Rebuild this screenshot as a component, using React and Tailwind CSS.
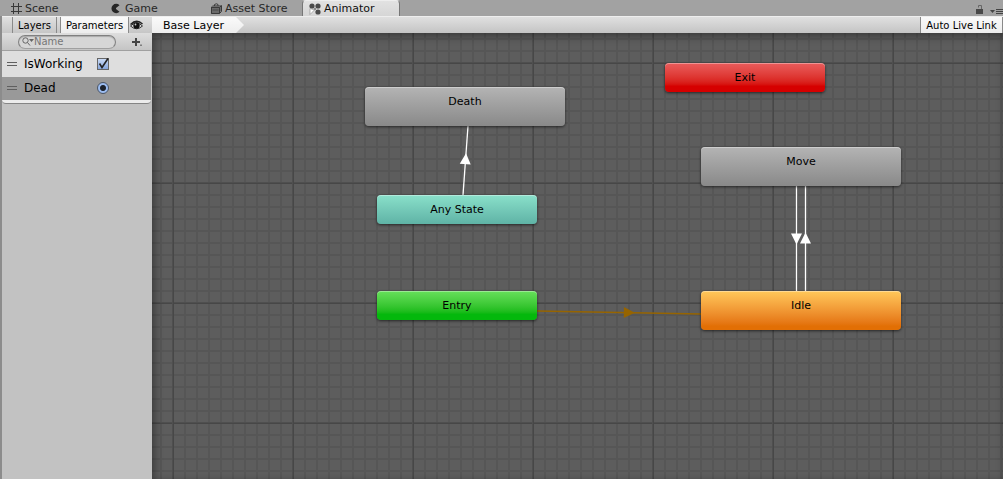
import { useState } from 'react'

const tabs = [
  { label: 'Scene', icon: SceneIcon, className: 'w-25 pl-2' },
  { label: 'Game', icon: GameIcon, className: 'w-25 pl-2' },
  { label: 'Asset Store', icon: StoreIcon, className: 'w-25 pl-2' },
  { label: 'Animator', icon: AnimatorIcon, className: 'w-[98px] pl-[6px]', active: true },
]

// Positions are in graph space, relative to the canvas corner
const nodes = [
  { label: 'Death', x: 213, y: 54, className: 'h-[39px] w-[200px] from-[#b4b4b4] to-[#898989]' },
  { label: 'Any State', x: 225, y: 162, className: 'h-[29px] w-[160px] from-[#8ae0ca] to-[#5fb3a6]' },
  { label: 'Entry', x: 225, y: 258, className: 'h-[29px] w-[160px] from-[#66e05a] to-[#04b80c] to-80%' },
  { label: 'Exit', x: 513, y: 30, className: 'h-[29px] w-[160px] from-[#e95c5c] to-[#d60000] to-80%' },
  { label: 'Move', x: 549, y: 114, className: 'h-[39px] w-[200px] from-[#b4b4b4] to-[#898989]' },
  { label: 'Idle', x: 549, y: 258, className: 'h-[39px] w-[200px] from-[#ffc85a] to-[#e26f04] to-90%' },
]

function SceneIcon() {
  return (
    <svg width="12" height="12" viewBox="0 0 12 12" fill="none" stroke="#383838" aria-hidden="true">
      <path d="M3.5 0v11M8.5 0v11M1 3.5h11M1 8.5h11" />
    </svg>
  )
}

function GameIcon() {
  return (
    <svg width="12" height="12" viewBox="0 0 12 12" fill="#262626" aria-hidden="true">
      <path d="M9.500 2.200A4.700 4.700 0 1 0 9.500 8.800L6 6V5Z" />
    </svg>
  )
}

function StoreIcon() {
  return (
    <svg width="12" height="12" viewBox="0 0 12 12" aria-hidden="true">
      <path d="M1 4l2-2h8v6l-2 3H1z" fill="#6a6a6a" />
      <path d="M4.500 3V1.500Q6.500 0 8 1.500V3M1 4.500h8.500L11.500 2.500v6L9.500 10.500M9.500 4.500v6h-8v-6" fill="none" stroke="#3a3a3a" />
      <path d="M2.500 7h6" stroke="#484848" />
    </svg>
  )
}

function AnimatorIcon() {
  return (
    <svg width="12" height="12" viewBox="0 0 12 12" aria-hidden="true">
      <path d="M3 3l6 6M9 3l-6 6" stroke="#888" />
      <g fill="#4a4a4a">
        <circle cx="3" cy="3" r="2.600" />
        <circle cx="9" cy="3" r="2.600" />
        <circle cx="9" cy="9" r="2.600" />
      </g>
      <path d="M1 5.500v6l4.500-4.500z" fill="#fff" stroke="#888" strokeWidth=".6" />
    </svg>
  )
}

function EyeIcon() {
  return (
    <svg width="13" height="11" viewBox="0 0 13 11" aria-hidden="true">
      <path d="M.5 6Q6.500 0 12.500 6 6.500 11.500 .5 6z" fill="#ddd" stroke="#333" />
      <path d="M.5 4.500Q6.500-1.500 12.500 4" fill="none" stroke="#222" strokeWidth="1.500" />
      <circle cx="6.500" cy="5.500" r="3.200" fill="#111" />
      <circle cx="5.500" cy="4.500" r=".9" fill="#ccc" />
    </svg>
  )
}

function Handle() {
  return (
    <span className="flex w-[10px] flex-col gap-[2px]">
      <span className="h-px bg-[#5f5f5f]" />
      <span className="h-px bg-[#5f5f5f]" />
    </span>
  )
}

function TabBar() {
  return (
    <div className="flex h-4 items-stretch justify-between bg-[#a2a2a2]">
      <div className="flex pl-[2px]">
        {tabs.map(({ label, icon: Icon, className, active }) => (
          <button
            key={label}
            type="button"
            className={`flex items-center gap-[3px] whitespace-nowrap text-[11px] leading-4 ${className} ${active ? 'rounded-t-sm border-x border-t border-[#777] border-t-[#eee] bg-linear-to-b from-[#e2e2e2] to-[#d6d6d6] pt-px text-[#111]' : 'pt-[2px] text-[#282828]'}`}
          >
            <Icon />
            <span>{label}</span>
          </button>
        ))}
      </div>
      <div className="flex items-end gap-[6px] pb-[1px]">
        <button type="button" aria-label="Lock">
          <svg width="8" height="10" viewBox="0 0 8 10" aria-hidden="true">
            <path d="M0 4h7v5H0z" fill="#484848" />
            <path d="M2.500 2.500V.5h3V4" fill="none" stroke="#666" />
          </svg>
        </button>
        <button type="button" aria-label="Window menu">
          <svg width="13" height="8" viewBox="0 0 13 8" aria-hidden="true">
            <path d="M0 3h5L2.500 6z" fill="#444" />
            <path d="M6 2.500h7M6 4.500h7M6 6.500h7" stroke="#444" />
          </svg>
        </button>
      </div>
    </div>
  )
}

function Parameters() {
  const [isWorking, setIsWorking] = useState(true)

  return (
    <aside className="flex w-[152px] shrink-0 flex-col border-l-2 border-[#8c8c8c] bg-[#c2c2c2]">
      <div className="flex h-[17px] items-stretch border-t border-[#eee] bg-linear-to-b from-[#e0e0e0] to-[#c6c6c6] text-[10px] leading-4">
        <button type="button" className="ml-[10px] w-[45px] border-x border-[#8a8a8a] pt-px">Layers</button>
        <button type="button" className="ml-[3px] w-[69px] border-x border-[#8a8a8a] bg-linear-to-b from-[#fafafa] to-[#ededed] pt-px">Parameters</button>
        <button type="button" aria-label="Toggle panel" className="flex w-[14px] items-center justify-center"><EyeIcon /></button>
      </div>

      <div className="flex h-[17px] items-center bg-linear-to-b from-[#dedede] to-[#c4c4c4] pl-4">
        <label className="flex h-[14px] w-[98px] items-center rounded-full border border-[#808080] border-b-[#a0a0a0] bg-[#d6d6d6] pl-[3px] shadow-[inset_0_1px_1px_#aaa]">
          <svg width="12" height="9" viewBox="0 0 12 9" fill="none" stroke="#666" aria-hidden="true">
            <circle cx="3.500" cy="3.500" r="2.700" />
            <path d="M5.500 5.500L8 8.500" />
            <path d="M7 2h5L9.500 5z" fill="#666" stroke="none" />
          </svg>
          <input type="text" aria-label="Search parameters" placeholder="Name" className="w-20 min-w-0 bg-transparent pt-px text-[10px] leading-3 outline-none placeholder:text-[#777]" />
        </label>
        <button type="button" aria-label="Add parameter" className="ml-4">
          <svg width="10" height="8" viewBox="0 0 10 8" aria-hidden="true">
            <path d="M4 0v8M0 4h8" stroke="#444" strokeWidth="2" />
            <path d="M9 6.500v1.500" stroke="#333" />
          </svg>
        </button>
      </div>

      <div className="mr-[1px] text-[12px] leading-4 text-black">
        <label className="flex h-[27px] items-center border-t border-[#a0a0a0] bg-[#dedede] pl-[5px]">
          <Handle />
          <span className="ml-[7px] w-[73px]">IsWorking</span>
          <span className="grid place-items-center">
            <input type="checkbox" checked={isWorking} onChange={(e) => setIsWorking(e.target.checked)} className="col-start-1 row-start-1 size-3 appearance-none border border-[#666] bg-linear-to-b from-[#c9daf5] to-[#86a6dc]" />
            {isWorking && (
              <svg className="pointer-events-none col-start-1 row-start-1" width="12" height="12" viewBox="0 0 12 12" fill="none" stroke="#222" strokeWidth="1.600" aria-hidden="true">
                <path d="M2.500 5.500L5 9.500 11 .5" />
              </svg>
            )}
          </span>
        </label>
        <label className="flex h-[22px] items-center bg-[#999] pl-[5px]">
          <Handle />
          <span className="ml-[7px] w-[73px]">Dead</span>
          <input type="radio" name="dead" defaultChecked className="size-3 appearance-none rounded-full border border-[#4c5667] bg-radial from-[#1c222c] from-35% to-[#9bbcf0] to-50%" />
        </label>
        <div className="h-[5px] rounded-b-sm border-t border-b border-t-[#999] border-b-[#858585] bg-[#ececec]" />
      </div>
    </aside>
  )
}

function Transition({ x1, y1, x2, y2, at, color }) {
  const angle = (Math.atan2(y2 - y1, x2 - x1) * 180) / Math.PI
  const x = x1 + (x2 - x1) * at
  const y = y1 + (y2 - y1) * at

  return (
    <g stroke={color} fill={color}>
      <line x1={x1} y1={y1} x2={x2} y2={y2} strokeWidth="1.300" />
      <path d="M-5-5.500L6 0-5 5.500z" stroke="none" transform={`translate(${x} ${y}) rotate(${angle})`} />
    </g>
  )
}

function Graph() {
  return (
    <div className="relative flex-1 overflow-hidden bg-[#5d5d5d]">
      <div className="absolute inset-0 bg-[linear-gradient(to_right,#4f4f4f_1px,#474747_1px,#474747_2px,transparent_2px),linear-gradient(#4f4f4f_1px,#474747_1px,#474747_2px,transparent_2px),linear-gradient(to_right,#565656_2px,transparent_2px),linear-gradient(#565656_2px,transparent_2px)] bg-size-[120px_120px,120px_120px,12px_12px,12px_12px] bg-position-[20px_29px,20px_29px,8px_5px,8px_5px]" />
      <div className="absolute inset-0 shadow-[inset_2px_3px_8px_rgba(0,0,0,0.4)]" />
      <svg className="absolute inset-0 size-full" aria-hidden="true">
        <Transition x1={311} y1={162} x2={316} y2={93} at={0.52} color="#fff" />
        <Transition x1={385} y1={278} x2={549} y2={281} at={0.56} color="#966400" />
        <Transition x1={644.5} y1={153} x2={644.5} y2={258} at={0.5} color="#fff" />
        <Transition x1={653.5} y1={258} x2={653.5} y2={153} at={0.5} color="#fff" />
      </svg>
      {nodes.map((node) => (
        <div
          key={node.label}
          className={`absolute rounded-sm bg-linear-to-b pt-[7px] text-center text-[11px] leading-4 text-black shadow-[0_1px_3px_rgba(0,0,0,0.6),inset_0_1px_0_rgba(255,255,255,0.35)] ${node.className}`}
          style={{ left: node.x, top: node.y }}
        >
          {node.label}
        </div>
      ))}
    </div>
  )
}

function App() {
  return (
    <div className="flex h-screen flex-col overflow-hidden bg-[#a2a2a2] font-['DejaVu_Sans',sans-serif]">
      <TabBar />
      <div className="flex min-h-0 flex-1">
        <Parameters />
        <main className="flex min-w-0 flex-1 flex-col">
          <div className="flex h-[17px] items-stretch justify-between border-t border-[#eee] bg-linear-to-b from-[#e0e0e0] to-[#c4c4c4]">
            <a href="#base-layer" className="w-[92px] bg-linear-to-b from-[#fafafa] to-[#ededed] pl-[11px] pt-px text-[11px] leading-4 [clip-path:polygon(0_0,84px_0,100%_50%,84px_100%,0_100%)]">Base Layer</a>
            <button type="button" className="w-[83px] whitespace-nowrap border-x border-[#8a8a8a] bg-linear-to-b from-[#fafafa] to-[#ededed] pt-px text-[10px] leading-4">Auto Live Link</button>
          </div>
          <Graph />
        </main>
      </div>
    </div>
  )
}

export default App
